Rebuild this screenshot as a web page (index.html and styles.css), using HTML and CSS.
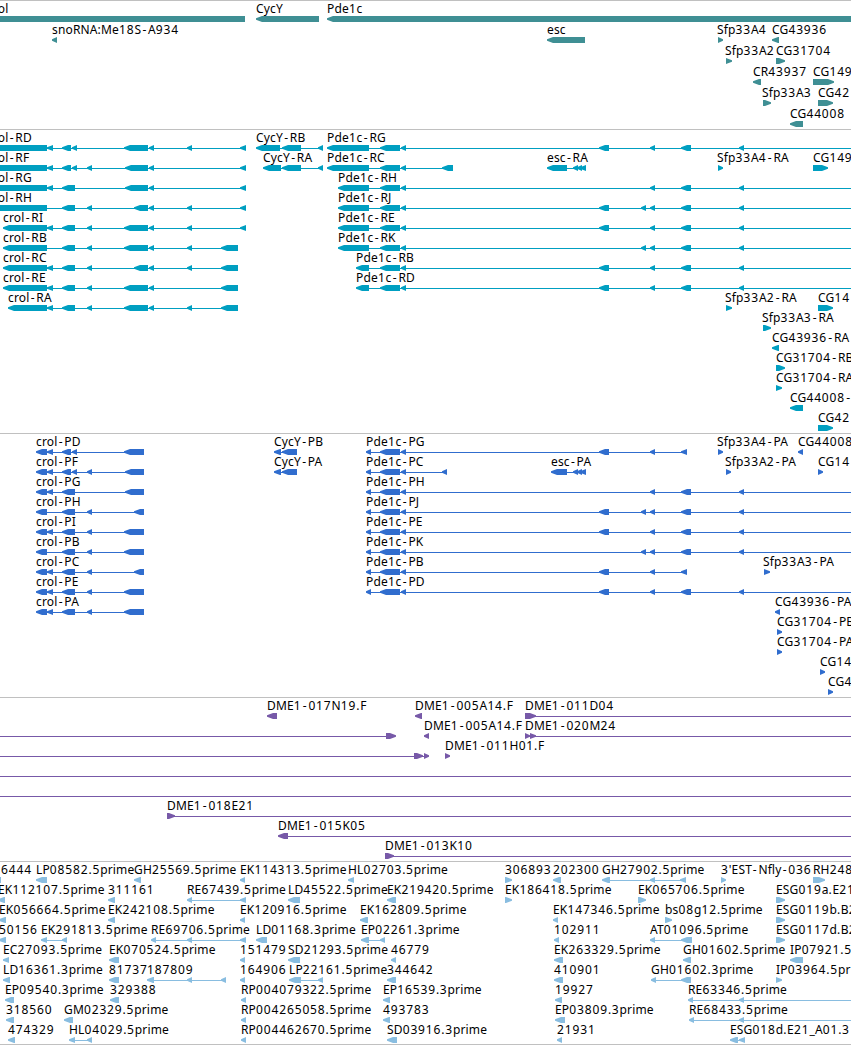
FILE: index.html
```html
<!DOCTYPE html>
<html lang="en">
<head>
    <meta charset="UTF-8">
    <meta name="viewport" content="width=device-width, initial-scale=1.0">
    <title>Genome browser</title>
    <link rel="stylesheet" href="styles.css">
</head>
<body>
    <div class="browser">
        <div class="track genes"><svg id="genes"></svg></div>
        <div class="track transcripts"><svg id="transcripts"></svg></div>
        <div class="track proteins"><svg id="proteins"></svg></div>
        <div class="track clones"><svg id="clones"></svg></div>
        <div class="track ests"><svg id="ests"></svg></div>
    </div>
    <script src="tracks.js"></script>
</body>
</html>
```

FILE: styles.css
```css
body {
    margin: 0;
    background-color: #fff;
    overflow: hidden;
}
.browser {
    border-bottom: 1px solid #c0c0c0;
}
.track {
    box-sizing: border-box;
    border-top: 1px solid #c0c0c0;
    overflow: hidden;
}
.track svg {
    display: block;
    width: 100%;
    height: 100%;
}
.track text {
    font-family: "Noto Sans", sans-serif;
    font-size: 12px;
    fill: #000;
}
.genes {
    height: 129px;
    fill: #3f8f94;
}
.transcripts {
    height: 304px;
    fill: #009fc1;
}
.proteins {
    height: 264px;
    fill: #306dce;
}
.clones {
    height: 164px;
    fill: #7759a8;
}
.ests {
    height: 183px;
    fill: #89bde0;
}
```

FILE: tracks.js
```javascript
const NS = "http://www.w3.org/2000/svg";
const END = 900; // past the right edge of the view

// [row, strand, label, label x, [[start, end], ...]]
const genes = [
    [0, "<", "crol", -13, [[-13, 245]]],
    [0, "<", "CycY", 256, [[256, 319]]],
    [0, "<", "Pde1c", 327, [[327, END]]],
    [1, "<", "snoRNA:Me18S-A934", 52, [[52, 57]]],
    [1, "<", "esc", 547, [[547, 585]]],
    [1, ">", "Sfp33A4", 717, [[718, 723]]],
    [1, "<", "CG43936", 772, [[772, 779]]],
    [2, ">", "Sfp33A2", 725, [[726, 732]]],
    [2, ">", "CG31704", 776, [[776, 785]]],
    [3, "<", "CR43937", 753, [[753, 761]]],
    [3, ">", "CG149", 813, [[813, 834]]],
    [4, ">", "Sfp33A3", 762, [[763, 771]]],
    [4, ">", "CG42", 818, [[818, 833]]],
    [5, "<", "CG44008", 790, [[790, 803]]]
];

const tail = [[650, 655], [681, 691], [739, 744], [END, END]];
const pde = [[380, 400], [401, 406]];

const transcripts = [
    [0, "<", "crol-RD", -13, [[-13, 47], [47, 53], [62, 71], [72, 77], [124, 148], [149, 154], [187, 192], [240, 246]]],
    [1, "<", "crol-RF", -13, [[-13, 47], [47, 53], [62, 71], [72, 77], [87, 92], [125, 148], [149, 154], [240, 246]]],
    [2, "<", "crol-RG", -13, [[-13, 47], [47, 53], [62, 75], [125, 148], [149, 154], [240, 246]]],
    [3, "<", "crol-RH", -13, [[-13, 47], [62, 75], [87, 92], [134, 148], [149, 154], [187, 192], [240, 246]]],
    [4, "<", "crol-RI", 3, [[3, 47], [47, 53], [62, 75], [87, 92], [124, 148], [149, 154], [187, 192], [240, 246]]],
    [5, "<", "crol-RB", 3, [[3, 47], [62, 75], [87, 92], [124, 148], [149, 154], [187, 192], [221, 238]]],
    [6, "<", "crol-RC", 3, [[3, 47], [47, 53], [62, 75], [87, 92], [134, 148], [149, 154], [187, 192], [221, 238]]],
    [7, "<", "crol-RE", 3, [[3, 47], [47, 53], [62, 75], [87, 92], [124, 148], [149, 154], [221, 238]]],
    [8, "<", "crol-RA", 8, [[8, 47], [47, 53], [62, 75], [87, 92], [124, 148], [149, 154], [187, 192], [221, 238]]],
    [0, "<", "CycY-RB", 256, [[256, 280], [282, 301], [318, 323]]],
    [1, "<", "CycY-RA", 263, [[263, 281], [282, 301], [318, 323]]],
    [0, "<", "Pde1c-RG", 327, [[327, 369], ...pde, [599, 609], ...tail]],
    [1, "<", "Pde1c-RC", 327, [[327, 369], ...pde, [442, 453]]],
    [2, "<", "Pde1c-RH", 338, [[338, 369], ...pde, ...tail]],
    [3, "<", "Pde1c-RJ", 338, [[338, 369], ...pde, [599, 609], [641, 646], ...tail]],
    [4, "<", "Pde1c-RE", 338, [[338, 369], ...pde, [599, 609], ...tail]],
    [5, "<", "Pde1c-RK", 338, [[338, 369], ...pde, [641, 646], ...tail]],
    [6, "<", "Pde1c-RB", 356, [[356, 369], ...pde, [599, 609], ...tail]],
    [7, "<", "Pde1c-RD", 356, [[356, 369], ...pde, [599, 609], ...tail]],
    [1, "<", "esc-RA", 547, [[547, 567], [573, 578], [577, 582], [580, 586]]],
    [1, ">", "Sfp33A4-RA", 717, [[718, 723]]],
    [1, ">", "CG149", 813, [[813, 828]]],
    [8, ">", "Sfp33A2-RA", 725, [[726, 732]]],
    [8, ">", "CG14", 818, [[818, 833]]],
    [9, ">", "Sfp33A3-RA", 762, [[763, 771]]],
    [10, "<", "CG43936-RA", 772, [[772, 779]]],
    [11, ">", "CG31704-RB", 776, [[776, 785]]],
    [12, ">", "CG31704-RA", 776, [[776, 782]]],
    [13, "<", "CG44008-", 790, [[790, 803]]],
    [14, ">", "CG42", 818, [[818, 833]]]
];

const proteins = [
    [0, "<", "crol-PD", 36, [[36, 47], [47, 53], [62, 71], [72, 77], [124, 144]]],
    [1, "<", "crol-PF", 36, [[36, 47], [47, 53], [62, 71], [72, 77], [87, 92], [125, 144]]],
    [2, "<", "crol-PG", 36, [[36, 47], [47, 53], [62, 75], [125, 144]]],
    [3, "<", "crol-PH", 36, [[36, 47], [62, 75], [87, 92], [134, 144]]],
    [4, "<", "crol-PI", 36, [[36, 47], [47, 53], [62, 75], [87, 92], [124, 144]]],
    [5, "<", "crol-PB", 36, [[36, 47], [62, 75], [87, 92], [124, 144]]],
    [6, "<", "crol-PC", 36, [[36, 47], [47, 53], [62, 75], [87, 92], [134, 144]]],
    [7, "<", "crol-PE", 36, [[36, 47], [47, 53], [62, 75], [87, 92], [124, 144]]],
    [8, "<", "crol-PA", 36, [[36, 47], [47, 53], [62, 75], [87, 92], [124, 144]]],
    [0, "<", "CycY-PB", 274, [[274, 281], [282, 297]]],
    [1, "<", "CycY-PA", 274, [[274, 281], [282, 297]]],
    [0, "<", "Pde1c-PG", 366, [[366, 371], ...pde, [599, 609], [650, 655], [681, 687]]],
    [1, "<", "Pde1c-PC", 366, [[366, 371], ...pde, [442, 447]]],
    [2, "<", "Pde1c-PH", 366, [[366, 371], ...pde, ...tail]],
    [3, "<", "Pde1c-PJ", 366, [[366, 371], ...pde, [599, 609], [641, 646], ...tail]],
    [4, "<", "Pde1c-PE", 366, [[366, 371], ...pde, [599, 609], ...tail]],
    [5, "<", "Pde1c-PK", 366, [[366, 371], ...pde, [641, 646], ...tail]],
    [6, "<", "Pde1c-PB", 366, [[366, 371], ...pde, [599, 609], [650, 655], [681, 687]]],
    [7, "<", "Pde1c-PD", 366, [[366, 371], ...pde, [599, 609], ...tail]],
    [1, "<", "esc-PA", 551, [[551, 567], [573, 578], [577, 582], [580, 586]]],
    [0, ">", "Sfp33A4-PA", 717, [[718, 723]]],
    [0, "<", "CG44008", 798, [[798, 803]]],
    [1, ">", "Sfp33A2-PA", 725, [[726, 731]]],
    [1, ">", "CG14", 818, [[818, 823]]],
    [6, ">", "Sfp33A3-PA", 763, [[764, 770]]],
    [8, "<", "CG43936-PA", 775, [[775, 780]]],
    [9, ">", "CG31704-PB", 777, [[777, 782]]],
    [10, ">", "CG31704-PA", 777, [[777, 782]]],
    [11, ">", "CG14", 820, [[820, 825]]],
    [12, ">", "CG4", 828, [[828, 833]]]
];

const clones = [
    [0, "<", "DME1-017N19.F", 267, [[267, 277]]],
    [0, "<", "DME1-005A14.F", 415, [[415, 422]]],
    [0, ">", "DME1-011D04", 525, [[525, 536], [END, END]]],
    [1, ">", "", 0, [[-9, -9], [386, 396]]],
    [1, "<", "DME1-005A14.F", 424, [[424, 429]]],
    [1, ">", "DME1-020M24", 525, [[525, 530], [530, 536], [END, END]]],
    [2, ">", "", 0, [[-9, -9], [414, 423], [424, 429]]],
    [2, ">", "DME1-011H01.F", 445, [[445, 450]]],
    [3, ">", "", 0, [[-9, -9], [END, END]]],
    [4, ">", "", 0, [[-9, -9], [END, END]]],
    [5, ">", "DME1-018E21", 167, [[167, 175], [END, END]]],
    [6, "<", "DME1-015K05", 278, [[278, 288], [END, END]]],
    [7, ">", "DME1-013K10", 385, [[385, 394], [END, END]]]
];

const ests = [
    [0, "<", "6444", 1, [[-6, 1]]],
    [0, "<", "LP08582.5prime", 36, [[36, 47]]],
    [0, "<", "GH25569.5prime", 134, [[134, 141]]],
    [0, "<", "EK114313.5prime", 240, [[240, 245]]],
    [0, "<", "HL02703.5prime", 348, [[348, 354]]],
    [0, ">", "306893", 505, [[505, 512]]],
    [0, "<", "202300", 553, [[553, 561]]],
    [0, "<", "GH27902.5prime", 602, [[602, 610], [650, 655], [680, 686]]],
    [0, ">", "3'EST-Nfly-036", 721, [[721, 726]]],
    [0, ">", "RH248", 813, [[813, 825]]],
    [1, "<", "EK112107.5prime", -2, [[-2, 5]]],
    [1, "<", "311161", 108, [[108, 115]]],
    [1, "<", "RE67439.5prime", 187, [[187, 192], [240, 246]]],
    [1, "<", "LD45522.5prime", 288, [[288, 300]]],
    [1, "<", "EK219420.5prime", 387, [[387, 396]]],
    [1, ">", "EK186418.5prime", 505, [[505, 512]]],
    [1, ">", "EK065706.5prime", 638, [[638, 646]]],
    [1, ">", "ESG019a.E21", 776, [[776, 785]]],
    [2, "<", "EK056664.5prime", -1, [[-1, 6]]],
    [2, "<", "EK242108.5prime", 108, [[108, 115]]],
    [2, "<", "EK120916.5prime", 240, [[240, 245]]],
    [2, "<", "EK162809.5prime", 360, [[360, 368]]],
    [2, "<", "EK147346.5prime", 553, [[553, 558]]],
    [2, ">", "bs08g12.5prime", 665, [[665, 672]]],
    [2, ">", "ESG0119b.B2", 776, [[776, 785]]],
    [3, "<", "50156", -1, [[-1, 6]]],
    [3, "<", "EK291813.5prime", 41, [[41, 47], [62, 67]]],
    [3, "<", "RE69706.5prime", 151, [[151, 156], [187, 192], [240, 246]]],
    [3, "<", "LD01168.3prime", 256, [[256, 267]]],
    [3, "<", "EP02261.3prime", 361, [[361, 369], [380, 385]]],
    [3, "<", "102911", 554, [[554, 559]]],
    [3, "<", "AT01096.5prime", 650, [[650, 655], [681, 692]]],
    [3, ">", "ESG0117d.B2", 776, [[776, 785]]],
    [4, "<", "EC27093.5prime", 3, [[3, 9]]],
    [4, "<", "EK070524.5prime", 109, [[109, 119]]],
    [4, "<", "151479", 240, [[240, 245]]],
    [4, "<", "SD21293.5prime", 288, [[288, 300]]],
    [4, "<", "46779", 391, [[391, 396]]],
    [4, "<", "EK263329.5prime", 554, [[554, 563]]],
    [4, "<", "GH01602.5prime", 683, [[683, 691]]],
    [4, "<", "IP07921.5", 790, [[790, 803]]],
    [5, "<", "LD16361.3prime", 3, [[3, 10]]],
    [5, "<", "81737", 109, [[109, 119]]],
    [5, "<", "187809", 147, [[147, 154], [187, 192], [221, 226]]],
    [5, "<", "164906", 240, [[240, 245]]],
    [5, "<", "LP22161.5prime", 289, [[289, 301], [318, 323]]],
    [5, "<", "344642", 387, [[387, 396]]],
    [5, "<", "410901", 554, [[554, 563]]],
    [5, "<", "GH01602.3prime", 651, [[651, 656], [681, 691]]],
    [5, ">", "IP03964.5pr", 776, [[776, 782]]],
    [6, "<", "EP09540.3prime", 5, [[5, 14]]],
    [6, "<", "329388", 110, [[110, 119]]],
    [6, "<", "RP004079322.5prime", 241, [[241, 246]]],
    [6, "<", "EP16539.3prime", 383, [[383, 390]]],
    [6, "<", "19927", 555, [[555, 562]]],
    [6, "<", "RE63346.5prime", 688, [[688, 693], [739, 744], [END, END]]],
    [7, "<", "318560", 6, [[6, 14]]],
    [7, "<", "GM02329.5prime", 64, [[64, 73]]],
    [7, "<", "RP004265058.5prime", 241, [[241, 246]]],
    [7, "<", "493783", 383, [[383, 390]]],
    [7, "<", "EP03809.3prime", 555, [[555, 565]]],
    [7, "<", "RE68433.5prime", 689, [[689, 694], [739, 744], [END, END]]],
    [8, "<", "474329", 8, [[8, 15]]],
    [8, "<", "HL04029.5prime", 69, [[69, 75], [87, 92]]],
    [8, "<", "RP004462670.5prime", 241, [[241, 246]]],
    [8, "<", "SD03916.3prime", 387, [[387, 397]]],
    [8, "<", "21931", 557, [[557, 562]]],
    [8, "<", "ESG018d.E21_A01.3", 730, [[730, 738], [739, 745]]]
];

function add(svg, name, attrs) {
    const el = document.createElementNS(NS, name);
    for (const key in attrs) {
        el.setAttribute(key, attrs[key]);
    }
    svg.appendChild(el);
    return el;
}

// digits and dashes get wider cells than the letters
function spacing(label) {
    let before = 0;
    return Array.from(label).map(function(c) {
        let after = 0.15;
        if (/[0-9]/.test(c)) after = 0.85;
        if (c === ".") after = 0.7;
        if (c === "-") after = 1.7;
        const dx = before + (c === "-" ? 1.3 : 0);
        before = after;
        return dx.toFixed(2);
    }).join(" ");
}

function drawTrack(id, features, pitch) {
    const svg = document.getElementById(id);
    features.forEach(function([row, strand, label, labelX, blocks]) {
        const y = 18 + row * pitch;
        const first = blocks[0][0];
        const last = blocks[blocks.length - 1][1];
        if (blocks.length > 1) {
            add(svg, "rect", { x: first + 2, y: y, width: last - first - 4, height: 1 });
        }
        blocks.forEach(function([a, b]) {
            if (a === b) return;
            const head = Math.min(6, b - a);
            const points = strand === "<"
                ? [a, y - 0.8, a + head, y - 3, b, y - 3, b, y + 3, a + head, y + 3, a, y + 0.8]
                : [b, y - 0.8, b - head, y - 3, a, y - 3, a, y + 3, b - head, y + 3, b, y + 0.8];
            add(svg, "polygon", { points: points.join(" ") });
        });
        if (label) {
            const text = add(svg, "text", { x: labelX, y: y - 6, dx: spacing(label) });
            text.textContent = label;
        }
    });
}

drawTrack("genes", genes, 21);
drawTrack("transcripts", transcripts, 20);
drawTrack("proteins", proteins, 20);
drawTrack("clones", clones, 20);
drawTrack("ests", ests, 20);
```
